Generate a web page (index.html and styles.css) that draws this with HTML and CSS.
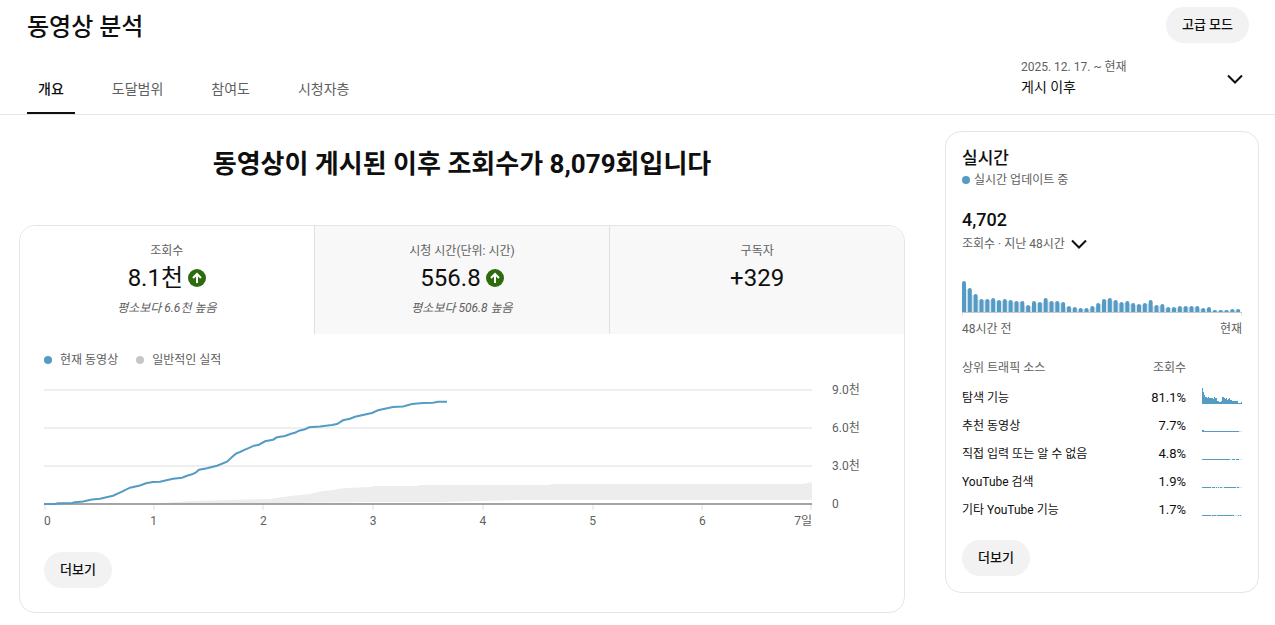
FILE: index.html
```
<!DOCTYPE html>
<html lang="ko">
<head>
    <meta charset="UTF-8">
    <meta name="viewport" content="width=device-width, initial-scale=1.0">
    <title>동영상 분석</title>
    <link rel="stylesheet" href="styles.css">
</head>
<body>
    <header class="header">
        <div class="title-row">
            <h1>동영상 분석</h1>
            <button class="pill">고급 모드</button>
        </div>
        <div class="nav-row">
            <nav class="tabs">
                <a href="#" class="tab active">개요</a>
                <a href="#" class="tab">도달범위</a>
                <a href="#" class="tab">참여도</a>
                <a href="#" class="tab">시청자층</a>
            </nav>
            <button class="period">
                <span class="period-text">
                    <span class="period-date">2025. 12. 17. ~ 현재</span>
                    <span class="period-name">게시 이후</span>
                </span>
                <svg class="chevron" viewBox="0 0 16 10"><path d="M1 1.5 L8 8.5 L15 1.5"/></svg>
            </button>
        </div>
    </header>

    <main class="content">
        <section class="overview">
            <h2>동영상이 게시된 이후 조회수가 8,079회입니다</h2>
            <div class="card">
                <div class="metrics">
                    <button class="metric selected">
                        <span class="metric-name">조회수</span>
                        <span class="metric-value">8.1천
                            <svg class="up" viewBox="0 0 18 18"><circle cx="9" cy="9" r="9"/><path d="M9 14 V5 M5 9 L9 5 L13 9"/></svg>
                        </span>
                        <em>평소보다 6.6천 높음</em>
                    </button>
                    <button class="metric">
                        <span class="metric-name">시청 시간(단위: 시간)</span>
                        <span class="metric-value">556.8
                            <svg class="up" viewBox="0 0 18 18"><circle cx="9" cy="9" r="9"/><path d="M9 14 V5 M5 9 L9 5 L13 9"/></svg>
                        </span>
                        <em>평소보다 506.8 높음</em>
                    </button>
                    <button class="metric last">
                        <span class="metric-name">구독자</span>
                        <span class="metric-value">+329</span>
                    </button>
                </div>
                <div class="card-body">
                    <div class="legend">
                        <span class="legend-item"><i class="dot"></i>현재 동영상</span>
                        <span class="legend-item"><i class="dot gray"></i>일반적인 실적</span>
                    </div>
                    <div class="chart">
                        <svg class="plot" viewBox="0 0 768 126" preserveAspectRatio="none">
                            <path class="grid-line" d="M0 6 H768 M0 44 H768 M0 82 H768"/>
                            <path class="grid-line" d="M1 120 V126 M110 120 V126 M219 120 V126 M329 120 V126 M439 120 V126 M549 120 V126 M658 120 V126 M767 120 V126"/>
                            <path class="typical" d="M119 119 L146 117 L186 116 L226 115 L246 112 L266 110 L278 107 L290 106 L293 105 L303 104 L326 103 L330 102 L373 102 L375 101 L504 101 L508 100 L759 100 L763 99 L768 98 V116 H476 L438 117 L396 118 H329 L240 119 Z"/>
                            <path class="axis" d="M0 120 H768"/>
                            <polyline class="current" points="0,120 11,120 14,119.3 28,119 31,118.3 39,117.5 48,115.5 56,114.7 69,111.7 78,107.7 86,103.7 96,101.5 102,99.3 109,98 116,97.7 129,94.7 138,93.7 143,91.7 148,90.3 152,88.3 155,85.7 163,84.3 173,81.8 183,77.7 188,73 192,69.7 196,68 201,65.7 204,64.3 210,61.7 215,60.7 221,57.3 229,55.7 233,53.3 241,52 247,49.7 251,48.7 255,46.7 261,45.3 265,43.3 276,42.5 288,41 293,40 299,36.3 306,34.7 311,32.7 328,29 334,26.3 349,23 359,22.5 368,20 379,19 389,18.7 394,17.8 403,17.8"/>
                        </svg>
                        <div class="y-labels">
                            <span>9.0천</span><span>6.0천</span><span>3.0천</span><span>0</span>
                        </div>
                        <div class="x-labels">
                            <span>0</span><span>1</span><span>2</span><span>3</span><span>4</span><span>5</span><span>6</span><span>7일</span>
                        </div>
                    </div>
                    <button class="pill">더보기</button>
                </div>
            </div>
        </section>

        <aside class="card realtime">
            <h3>실시간</h3>
            <p class="updating"><i class="dot"></i>실시간 업데이트 중</p>
            <p class="count">4,702</p>
            <button class="range">조회수 · 지난 48시간
                <svg class="chevron" viewBox="0 0 16 10"><path d="M1 1.5 L8 8.5 L15 1.5"/></svg>
            </button>
            <svg id="hours" class="hours" viewBox="0 0 280 40" preserveAspectRatio="none"></svg>
            <div class="hours-labels"><span>48시간 전</span><span>현재</span></div>
            <table class="traffic">
                <thead>
                    <tr><th>상위 트래픽 소스</th><th class="num">조회수</th><th class="spark"></th></tr>
                </thead>
                <tbody>
                    <tr><td>탐색 기능</td><td class="num">81.1%</td><td class="spark"><svg viewBox="0 0 40 16"><path id="spark" class="fill"/></svg></td></tr>
                    <tr><td>추천 동영상</td><td class="num">7.7%</td><td class="spark"><svg viewBox="0 0 40 16"><path class="pale" d="M0 15 H40 V16 H0Z"/><path class="fill" d="M0 14 H2 V15 H37 V16 H0Z"/></svg></td></tr>
                    <tr><td>직접 입력 또는 알 수 없음</td><td class="num">4.8%</td><td class="spark"><svg viewBox="0 0 40 16"><path class="pale" d="M0 15 H40 V16 H0Z"/><path class="fill" d="M0 15 H28 V16 H0Z M30 15 H33 V16 H30Z M34 15 H37 V16 H34Z"/></svg></td></tr>
                    <tr><td>YouTube 검색</td><td class="num">1.9%</td><td class="spark"><svg viewBox="0 0 40 16"><path class="pale" d="M0 15 H40 V16 H0Z"/><path class="fill" d="M0 15 H9 V16 H0Z M10 15 H13 V16 H10Z M14 15 H15 V16 H14Z M16 15 H17 V16 H16Z M18 15 H20 V16 H18Z M22 15 H34 V16 H22Z M35 15 H37 V16 H35Z"/></svg></td></tr>
                    <tr><td>기타 YouTube 기능</td><td class="num">1.7%</td><td class="spark"><svg viewBox="0 0 40 16"><path class="pale" d="M0 15 H40 V16 H0Z"/><path class="fill" d="M0 15 H9 V16 H0Z M10 15 H14 V16 H10Z M15 15 H32 V16 H15Z M36 15 H37 V16 H36Z M38 15 H39 V16 H38Z"/></svg></td></tr>
                </tbody>
            </table>
            <button class="pill">더보기</button>
        </aside>
    </main>

    <script>
        // views per hour, oldest first
        let views = [31, 24, 18, 13, 13, 14, 12, 13, 12, 11, 11, 7, 11, 10, 14, 11,
            11, 10, 6, 5, 4, 4, 6, 9, 13, 14, 12, 10, 11, 9, 8, 9,
            12, 7, 8, 5, 5, 6, 6, 6, 6, 4, 5, 2, 2, 2, 3, 3];

        let step = 280 / views.length;
        let pale = "";
        let bars = "";
        views.forEach((v, i) => {
            let x = i * step;
            let next = views[i + 1] || 0;
            let low = Math.min(v, next);
            let r = Math.min(2, v / 2);
            pale += `M${x + 3} ${36 - low + 1}H${x + step + 1}V36H${x + 3}Z`;
            bars += `M${x} 36V${36 - v + r}Q${x} ${36 - v} ${x + 2} ${36 - v}Q${x + 4} ${36 - v} ${x + 4} ${36 - v + r}V36Z`;
        });
        document.querySelector("#hours").innerHTML =
            `<path class="pale" d="${pale}"/><path class="fill" d="${bars}"/>
            <path class="base" d="M0 36H280V37H0Z"/><path class="edge" d="M0 37H1V40H0Z M279 37H280V40H279Z"/>`;

        // small version of the same series for the first traffic source
        let d = "M0 16";
        for(let i = 0; i < 40; i++){
            let v = views[Math.floor(i * views.length / 40)];
            d += `V${16 - Math.max(1, Math.round(v / 2))}H${i + 1}`;
        }
        document.querySelector("#spark").setAttribute("d", d + "V16Z");
    </script>
</body>
</html>
```
FILE: styles.css
```
*{
    box-sizing: border-box;
}
body{
    margin: 0;
    background-color: #fff;
    color: #0f0f0f;
    font-family: Roboto, "Noto Sans CJK KR", sans-serif;
    font-size: 12px;
    line-height: 16px;
}
h1, h2, h3, p{
    margin: 0;
}
button{
    border: none;
    padding: 0;
    background: none;
    color: inherit;
    font: inherit;
    text-align: left;
    cursor: pointer;
}
svg{
    display: block;
    flex: none;
}
.header{
    border-bottom: 1px solid #e5e5e5;
}
.title-row, .nav-row{
    display: flex;
    justify-content: space-between;
    padding: 0 26px 0 27px;
}
.title-row{
    align-items: center;
    height: 50px;
}
h1{
    padding-top: 4px;
    font-size: 24px;
    line-height: 32px;
    font-weight: 500;
}
.pill{
    height: 36px;
    padding: 0 16px;
    border-radius: 18px;
    background-color: #f2f2f2;
    font-size: 13px;
    font-weight: 500;
}
.nav-row{
    height: 64px;
}
.tabs{
    display: flex;
    gap: 26px;
    align-items: flex-end;
}
.tab{
    height: 48px;
    padding: 0 11px;
    border-bottom: 2px solid transparent;
    color: #606060;
    font-size: 14px;
    line-height: 46px;
    text-decoration: none;
}
.tab.active{
    border-color: #0f0f0f;
    color: #0f0f0f;
    font-weight: 500;
}
.period{
    display: flex;
    justify-content: space-between;
    align-items: center;
    width: 228px;
    padding: 0 6px 6px 0;
}
.period-text{
    display: flex;
    flex-direction: column;
}
.period-date{
    color: #606060;
}
.period-name{
    font-size: 14px;
    line-height: 24px;
}
.chevron{
    width: 16px;
    height: 10px;
    fill: none;
    stroke: #0f0f0f;
    stroke-width: 2;
}
.content{
    display: flex;
    align-items: flex-start;
    gap: 40px;
    padding: 16px 16px 12px 19px;
}
.overview{
    flex: 1;
    min-width: 0;
}
h2{
    padding: 15px 0 43px;
    font-size: 26px;
    line-height: 36px;
    font-weight: 700;
    text-align: center;
}
.card{
    border: 1px solid #e5e5e5;
    border-radius: 16px;
    overflow: hidden;
}
.metrics{
    display: grid;
    grid-template-columns: repeat(3, 1fr);
}
.metric{
    display: flex;
    flex-direction: column;
    align-items: center;
    height: 108px;
    padding-top: 17px;
    background-color: #f8f8f8;
    color: #606060;
}
.metric.selected{
    border-right: 1px solid #e0e0e0;
    background-color: #fff;
}
.metric.last{
    border-left: 1px solid #e0e0e0;
}
.metric-value{
    display: flex;
    align-items: center;
    gap: 5px;
    margin-bottom: 3px;
    color: #0f0f0f;
    font-size: 24px;
    line-height: 38px;
}
.up{
    width: 18px;
    height: 18px;
}
.up circle{
    fill: #2e6b0f;
}
.up path{
    fill: none;
    stroke: #fff;
    stroke-width: 2;
}
.card-body{
    padding: 18px 24px 24px;
}
.legend{
    display: flex;
    gap: 18px;
    color: #606060;
}
.legend-item, .updating{
    display: flex;
    align-items: center;
    gap: 8px;
}
.dot{
    width: 8px;
    height: 8px;
    border-radius: 50%;
    background-color: #549cc5;
}
.dot.gray{
    background-color: #c6c6c6;
}
.chart{
    display: grid;
    grid-template-columns: 1fr 48px;
    column-gap: 20px;
    margin: 16px 0 23px;
    color: #606060;
}
.plot{
    width: 100%;
    height: 126px;
}
.grid-line, .axis, .current{
    fill: none;
    stroke: #efefef;
    stroke-width: 2;
    vector-effect: non-scaling-stroke;
}
.axis{
    stroke: #a3a3a3;
}
.typical{
    fill: #ededed;
}
.current{
    stroke: #549cc5;
}
.y-labels{
    display: flex;
    flex-direction: column;
    gap: 22px;
    height: 126px;
    margin-top: -2px;
}
.x-labels{
    display: grid;
    grid-template-columns: 1fr repeat(6, 2fr) 1fr;
    padding-top: 3px;
    text-align: center;
}
.x-labels span:first-child{
    text-align: left;
}
.x-labels span:last-child{
    text-align: right;
}
.realtime{
    width: 314px;
    padding: 14px 16px 16px;
}
h3{
    font-size: 17px;
    line-height: 24px;
    font-weight: 500;
}
.updating{
    gap: 4px;
    line-height: 20px;
    color: #606060;
}
.count{
    margin-top: 18px;
    font-size: 18px;
    line-height: 24px;
    font-weight: 500;
}
.range{
    display: flex;
    align-items: center;
    gap: 6px;
    height: 24px;
    color: #606060;
}
.hours{
    width: 100%;
    height: 40px;
    margin-top: 20px;
}
.fill{
    fill: #549cc5;
}
.pale{
    fill: #dae6f0;
}
.base{
    fill: #c8c8c8;
}
.edge{
    fill: #e5e5e5;
}
.hours-labels{
    display: flex;
    justify-content: space-between;
    margin-top: 5px;
    color: #606060;
}
.traffic{
    width: 100%;
    margin: 15px 0 16px;
    border-collapse: collapse;
}
.traffic th{
    height: 32px;
    padding: 0;
    color: #606060;
    font-weight: 400;
    text-align: left;
}
.traffic td{
    height: 28px;
    padding: 0;
}
.traffic .num{
    text-align: right;
}
.traffic td.num{
    font-size: 13px;
}
.traffic .spark{
    width: 56px;
    padding: 0 0 4px 16px;
}
.spark svg{
    width: 40px;
    height: 16px;
}
```
